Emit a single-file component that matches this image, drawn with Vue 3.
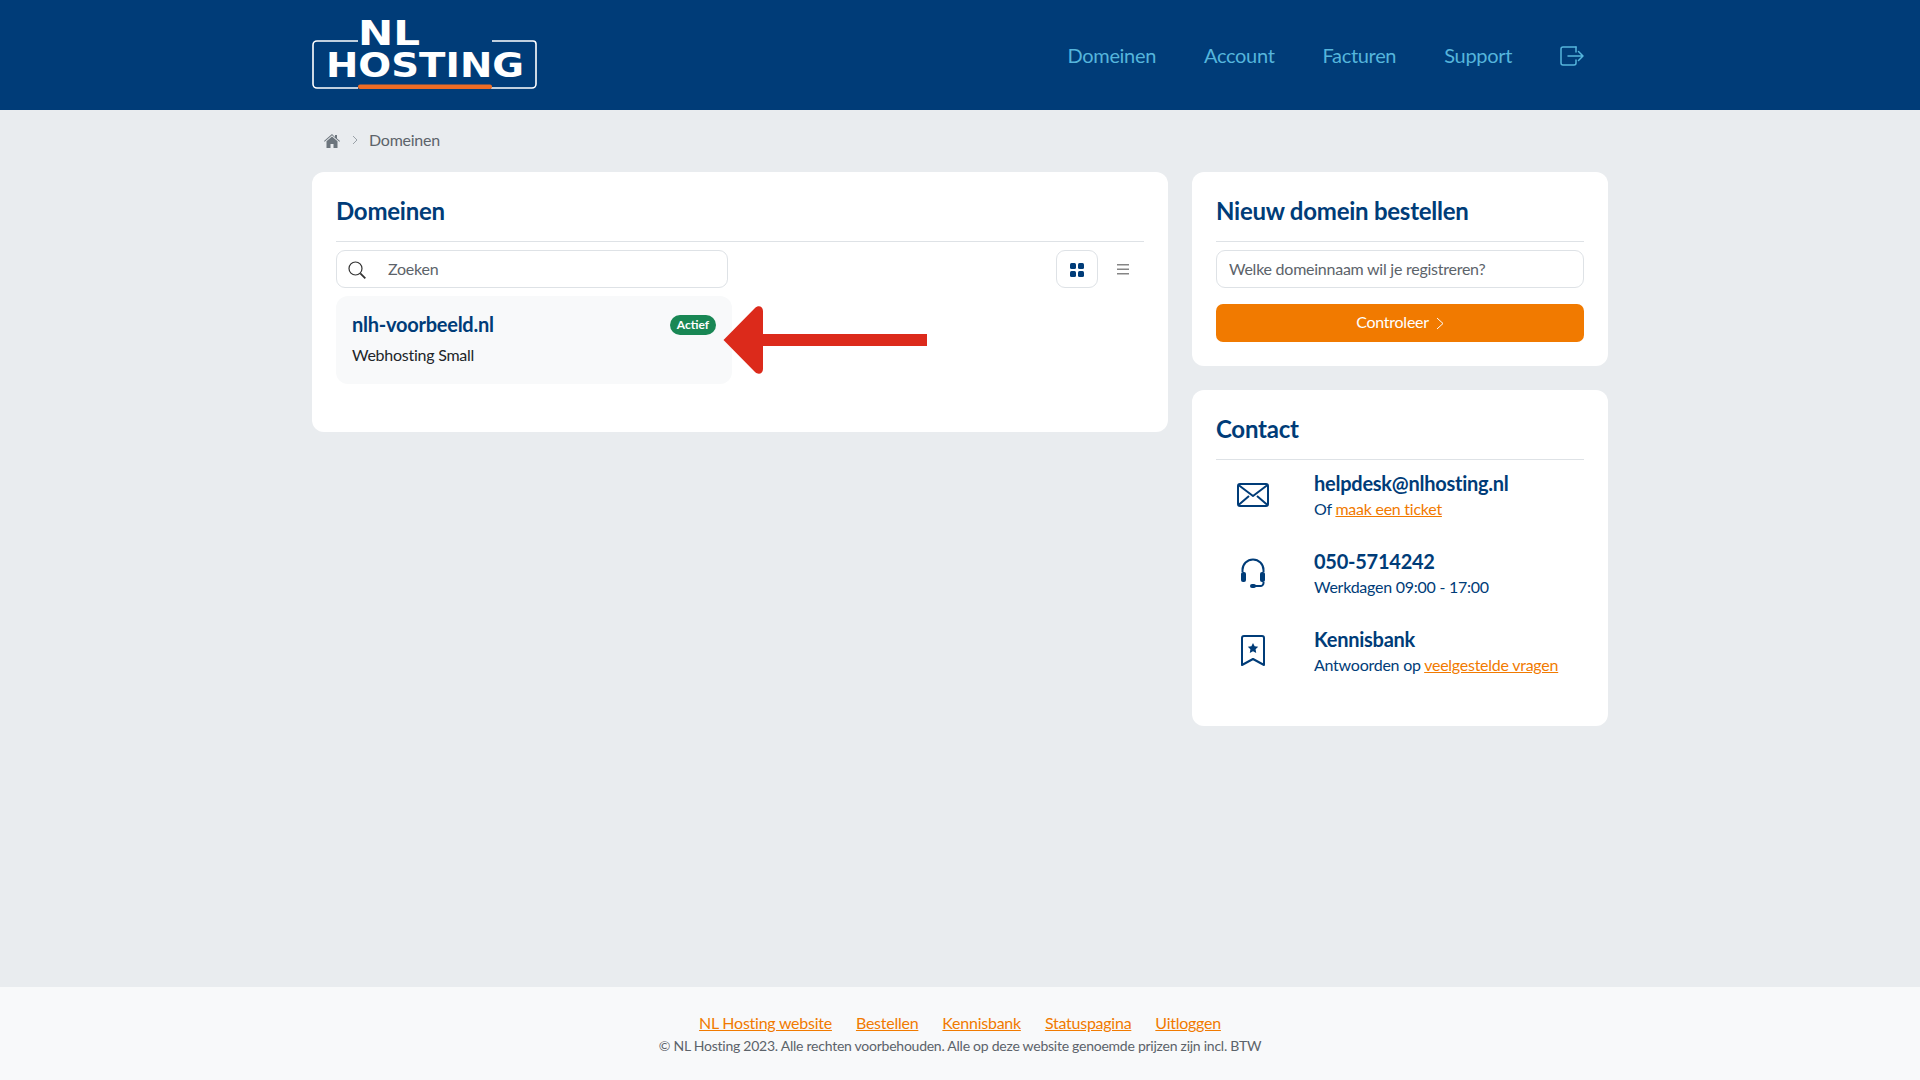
<template>
  <div class="page">
    <header class="topbar">
      <div class="container topbar-inner">
        <a class="logo" href="#">
          <svg width="225" height="90" viewBox="0 -10 225 90">
            <path d="M46 21H5a4 4 0 0 0-4 4v39a4 4 0 0 0 4 4h41M180 21h41a3 3 0 0 1 3 3v40a4 4 0 0 1-4 4h-41" fill="none" stroke="#fff" stroke-width="1.6" />
            <rect x="46" y="64.5" width="134" height="4.5" rx="2" fill="#ee6c25" />
            <text x="46" y="25" class="logo-text" textLength="62" lengthAdjust="spacingAndGlyphs">NL</text>
            <text x="14" y="57" class="logo-text" textLength="198" lengthAdjust="spacingAndGlyphs">HOSTING</text>
          </svg>
        </a>
        <nav class="mainnav">
          <a v-for="item in navItems" :key="item" href="#">{{ item }}</a>
          <a class="logout" href="#" aria-label="Uitloggen">
            <svg width="24" height="20" viewBox="0 0 24 20" fill="none" stroke="#55b5dc" stroke-width="1.5" stroke-linecap="round" stroke-linejoin="round">
              <path d="M16 1H3a2 2 0 0 0-2 2v14a2 2 0 0 0 2 2h11a2 2 0 0 0 2-2v-3" />
              <path d="M8 10h15M18.5 5.5 23 10l-4.500 4.500M16 1v5" />
            </svg>
          </a>
        </nav>
      </div>
    </header>

    <main class="container">
      <div class="breadcrumb">
        <svg class="home" width="16" height="14" viewBox="0 0 16 14">
          <path d="M8 0 0 7l.6.7L8 1.300l7.400 6.400.6-.7-3-2.600V1h-2v2z" fill="#6c757d" />
          <path d="M8 2.600 2.500 7.300V14h4v-4h3v4h4V7.300z" fill="#6c757d" />
        </svg>
        <svg class="crumb-sep" width="6" height="10" viewBox="0 0 6 10" fill="none" stroke="#9aa1a8">
          <path d="m1 1 4 4-4 4" />
        </svg>
        <span>Domeinen</span>
      </div>

      <div class="columns">
        <section class="card domains">
          <h2>Domeinen</h2>
          <div class="toolbar">
            <div class="search">
              <svg width="18" height="18" viewBox="0 0 18 18" fill="none" stroke="#333" stroke-width="1.200">
                <circle cx="7.500" cy="7.500" r="6.500" />
                <path d="m12.300 12.300 5 5" stroke-width="1.800" />
              </svg>
              <input type="text" placeholder="Zoeken" />
            </div>
            <div class="views">
              <button class="view-btn active" aria-label="Tegels">
                <svg width="14" height="14" viewBox="0 0 14 14" fill="#003c78">
                  <rect width="6" height="6" rx="1.500" />
                  <rect x="8" width="6" height="6" rx="1.500" />
                  <rect y="8" width="6" height="6" rx="1.500" />
                  <rect x="8" y="8" width="6" height="6" rx="1.500" />
                </svg>
              </button>
              <button class="view-btn" aria-label="Lijst">
                <svg width="12" height="11" viewBox="0 0 12 11" fill="#858585">
                  <rect width="12" height="1.500" />
                  <rect y="4.500" width="12" height="1.500" />
                  <rect y="9" width="12" height="1.500" />
                </svg>
              </button>
            </div>
          </div>

          <div class="domain-wrap">
            <a class="domain" href="#">
              <div class="domain-top">
                <span class="domain-name">nlh-voorbeeld.nl</span>
                <span class="badge">Actief</span>
              </div>
              <div class="domain-pack">Webhosting Small</div>
            </a>
            <svg class="arrow" width="205" height="70" viewBox="0 0 205 70">
              <path d="M1.500 35 33 3c3-3 8-2 8 3v23h164v12H41v23c0 5-5 6-8 3z" fill="#dc2a1b" />
            </svg>
          </div>
        </section>

        <aside class="side">
          <section class="card order">
            <h2>Nieuw domein bestellen</h2>
            <input class="order-input" type="text" placeholder="Welke domeinnaam wil je registreren?" />
            <button class="order-btn">
              Controleer
              <svg width="8" height="13" viewBox="0 0 8 13" fill="none" stroke="#fff">
                <path d="m1 1 6 5.500L1 12" />
              </svg>
            </button>
          </section>

          <section class="card contact">
            <h2>Contact</h2>
            <div class="contact-list">
              <div class="contact-row">
                <div class="contact-icon">
                  <svg width="32" height="24" viewBox="0 0 32 24" fill="none" stroke="#003c78" stroke-width="2" stroke-linejoin="round">
                    <rect x="1" y="1" width="30" height="22" rx="2" />
                    <path d="m1.500 2 14.500 11L30.500 2M1.500 22l10.500-9M30.500 22 20 13" />
                  </svg>
                </div>
                <div>
                  <div class="contact-title">helpdesk@nlhosting.nl</div>
                  <div class="contact-sub">Of <a href="#">maak een ticket</a></div>
                </div>
              </div>
              <div class="contact-row">
                <div class="contact-icon">
                  <svg width="26" height="30" viewBox="0 0 26 30" fill="none" stroke="#003c78" stroke-width="2">
                    <path d="M2.500 14V12a10.500 10.500 0 0 1 21 0v2" />
                    <rect x="1" y="14" width="5" height="10" rx="2" fill="#003c78" stroke="none" />
                    <rect x="20" y="14" width="5" height="10" rx="2" fill="#003c78" stroke="none" />
                    <path d="M23.500 24v1a3 3 0 0 1-3 3H14" />
                    <rect x="10" y="26" width="6" height="4" rx="2" fill="#003c78" stroke="none" />
                  </svg>
                </div>
                <div>
                  <div class="contact-title">050-5714242</div>
                  <div class="contact-sub">Werkdagen 09:00 - 17:00</div>
                </div>
              </div>
              <div class="contact-row">
                <div class="contact-icon">
                  <svg width="24" height="32" viewBox="0 0 24 32" fill="none" stroke="#003c78" stroke-width="2" stroke-linejoin="round">
                    <path d="M1 30V3a2 2 0 0 1 2-2h18a2 2 0 0 1 2 2v27l-11-6z" />
                    <path d="m12 8 1.600 3.300 3.600.5-2.600 2.500.6 3.600-3.200-1.700-3.200 1.700.6-3.600-2.600-2.500 3.600-.5z" fill="#003c78" stroke="none" />
                  </svg>
                </div>
                <div>
                  <div class="contact-title">Kennisbank</div>
                  <div class="contact-sub">Antwoorden op <a href="#">veelgestelde vragen</a></div>
                </div>
              </div>
            </div>
          </section>
        </aside>
      </div>
    </main>

    <footer class="footer">
      <div class="footer-links">
        <a v-for="link in footerLinks" :key="link" href="#">{{ link }}</a>
      </div>
      <div class="copyright">© NL Hosting 2023. Alle rechten voorbehouden. Alle op deze website genoemde prijzen zijn incl. BTW</div>
    </footer>
  </div>
</template>

<script setup>
const navItems = ['Domeinen', 'Account', 'Facturen', 'Support']
const footerLinks = ['NL Hosting website', 'Bestellen', 'Kennisbank', 'Statuspagina', 'Uitloggen']
</script>

<style>
body {
  background: #e9ecef;
}
</style>

<style scoped>
.page {
  min-height: 100vh;
  display: flex;
  flex-direction: column;
  font-family: Lato, "Open Sans", sans-serif;
  font-size: 16px;
  letter-spacing: -0.25px;
  color: #212529;
}

.container {
  width: 1296px;
  margin: 0 auto;
}

.topbar {
  background: #003c78;
  height: 110px;
}

.topbar-inner {
  height: 100%;
  display: flex;
  align-items: center;
  justify-content: space-between;
}

.logo {
  display: block;
  height: 90px;
}

.logo svg {
  display: block;
}

.logo-text {
  font-family: "DejaVu Sans", sans-serif;
  font-size: 33px;
  font-weight: 700;
  letter-spacing: 0;
  fill: #fff;
}

.mainnav {
  display: flex;
  align-items: center;
  gap: 48px;
  margin-right: 24px;
}

.mainnav a {
  color: #55b5dc;
  font-size: 20px;
  letter-spacing: -0.32px;
  text-decoration: none;
}

.logout {
  display: flex;
  margin-top: 2px;
}

.breadcrumb {
  height: 59px;
  margin-bottom: 3px;
  display: flex;
  align-items: center;
  padding-left: 12px;
  color: #5c636a;
}

.home {
  margin-top: 3px;
}

.crumb-sep {
  margin: 1px 11px 0 12px;
}

.columns {
  display: flex;
  gap: 24px;
  align-items: flex-start;
}

.card {
  box-sizing: border-box;
  background: #fff;
  border-radius: 12px;
  padding: 23px 24px 24px;
}

.card h2 {
  margin: 0;
  padding-bottom: 15px;
  border-bottom: 1px solid #dee2e6;
  color: #003c78;
  font-size: 24px;
  font-weight: 700;
  line-height: 31px;
}

.domains {
  width: 856px;
  height: 260px;
}

.toolbar {
  display: flex;
  justify-content: space-between;
  margin-top: 8px;
}

.search {
  width: 392px;
  height: 38px;
  box-sizing: border-box;
  display: flex;
  align-items: center;
  gap: 22px;
  padding-left: 11px;
  border: 1px solid #dee2e6;
  border-radius: 9px;
}

.search svg {
  flex: none;
  margin-top: 2px;
}

.search input {
  flex: 1;
  min-width: 0;
  border: 0;
  outline: 0;
  padding: 0 0 2px;
  font: inherit;
  letter-spacing: inherit;
}

input::placeholder {
  color: #5c636a;
  opacity: 1;
}

.views {
  display: flex;
  gap: 4px;
}

.view-btn {
  width: 42px;
  height: 38px;
  display: flex;
  align-items: center;
  justify-content: center;
  padding: 1px 0 0;
  background: #fff;
  border: 1px solid transparent;
  border-radius: 9px;
}

.view-btn.active {
  border-color: #dee2e6;
}

.domain-wrap {
  position: relative;
  margin-top: 8px;
}

.domain {
  display: block;
  width: 396px;
  height: 88px;
  box-sizing: border-box;
  padding: 16px;
  background: #f8f9fa;
  border-radius: 12px;
  text-decoration: none;
  color: #212529;
}

.domain-top {
  display: flex;
  align-items: center;
  justify-content: space-between;
  height: 25px;
}

.domain-name {
  color: #003c78;
  font-size: 20px;
  font-weight: 700;
  margin-top: -1px;
}

.badge {
  width: 46px;
  height: 20px;
  line-height: 20px;
  text-align: center;
  border-radius: 10px;
  background: #198754;
  color: #fff;
  font-size: 12px;
  font-weight: 700;
  letter-spacing: 0;
}

.domain-pack {
  margin-top: 7px;
  line-height: 22px;
}

.arrow {
  position: absolute;
  left: 386px;
  top: 9px;
}

.side {
  width: 416px;
  display: flex;
  flex-direction: column;
  gap: 24px;
}

.order {
  height: 194px;
}

.order-input {
  display: block;
  width: 100%;
  height: 38px;
  box-sizing: border-box;
  margin-top: 8px;
  padding: 0 12px 2px;
  border: 1px solid #dee2e6;
  border-radius: 9px;
  outline: 0;
  font: inherit;
  letter-spacing: inherit;
}

.order-btn {
  width: 100%;
  height: 38px;
  margin-top: 16px;
  display: flex;
  align-items: center;
  justify-content: center;
  gap: 7px;
  padding: 0 0 3px;
  background: #f17a00;
  border: 0;
  border-radius: 7px;
  color: #fff;
  font: inherit;
  letter-spacing: inherit;
}

.order-btn svg {
  margin-top: 3px;
}

.contact {
  height: 336px;
}

.contact-list {
  display: flex;
  flex-direction: column;
  gap: 26px;
  margin-top: 10px;
}

.contact-row {
  display: grid;
  grid-template-columns: 74px 1fr;
  column-gap: 24px;
  align-items: center;
}

.contact-icon {
  display: flex;
  justify-content: center;
  margin-top: -2px;
}

.contact-title {
  color: #003c78;
  font-size: 20px;
  font-weight: 700;
  line-height: 26px;
}

.contact-sub {
  color: #003c78;
  line-height: 26px;
}

.contact-sub a {
  color: #f17a00;
}

.footer {
  margin-top: auto;
  height: 93px;
  box-sizing: border-box;
  padding-top: 25px;
  background: #f8f9fa;
  text-align: center;
}

.footer-links {
  display: flex;
  justify-content: center;
  gap: 24px;
  line-height: 22px;
}

.footer-links a {
  color: #f17a00;
}

.copyright {
  margin-top: 1px;
  color: #5c636a;
  font-size: 14px;
  line-height: 22px;
}
</style>
